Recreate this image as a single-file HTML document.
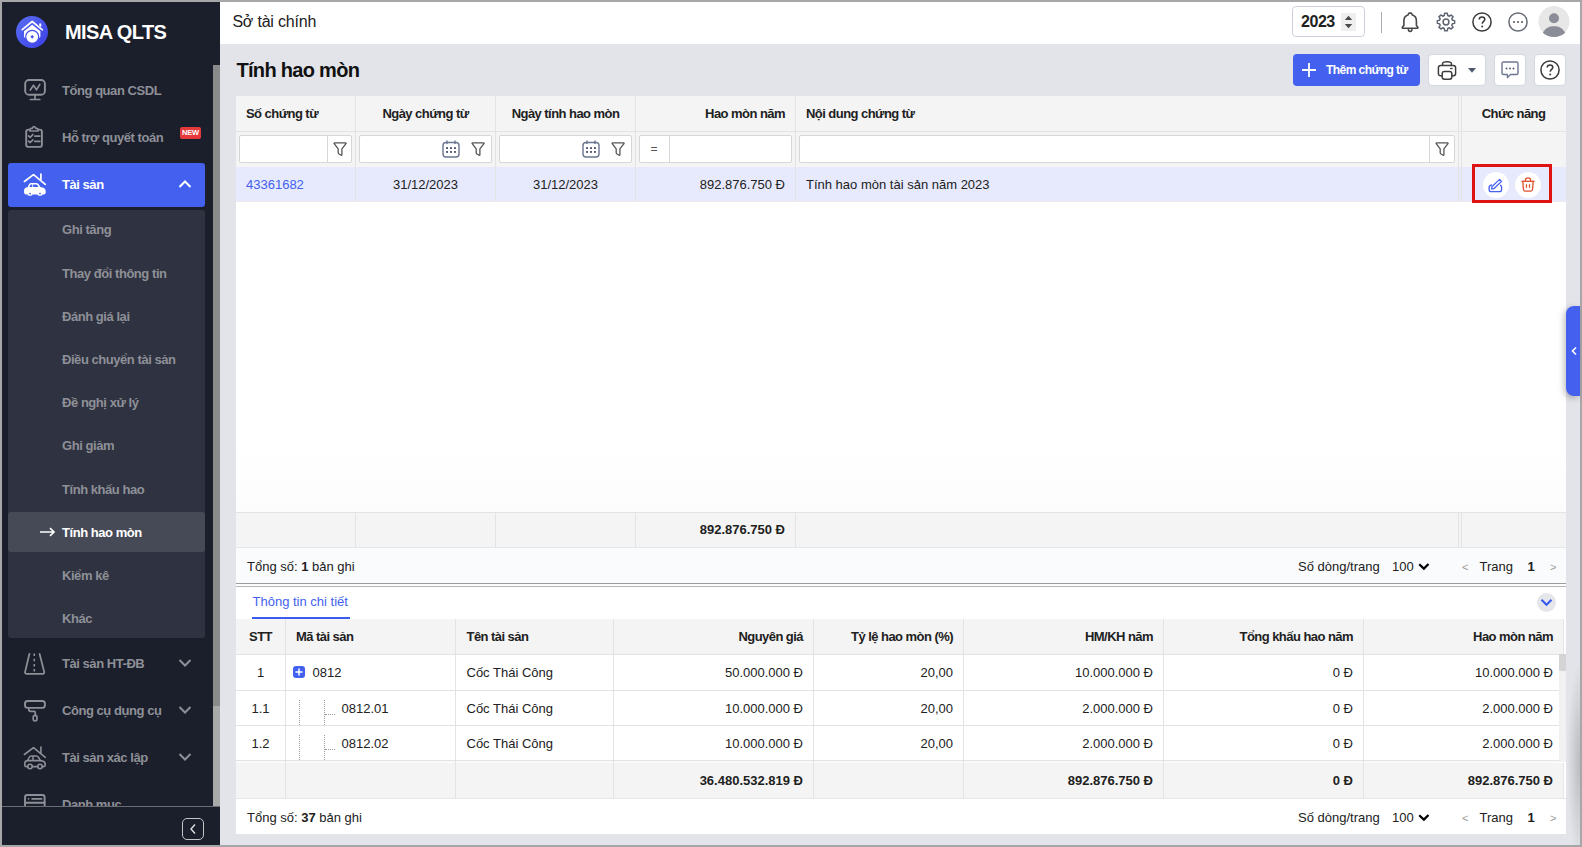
<!DOCTYPE html>
<html><head><meta charset="utf-8">
<style>
*{box-sizing:border-box;margin:0;padding:0}
html,body{width:1582px;height:847px;overflow:hidden}
body{background:#a7a7a9;font-family:"Liberation Sans",sans-serif;position:relative;color:#212121}
.a{position:absolute}
.t{position:absolute;line-height:1;white-space:nowrap}
.b{font-weight:bold}
.si{color:#8e9097;font-weight:bold;letter-spacing:-0.45px}
.th{font-weight:bold;letter-spacing:-0.55px;color:#212121}
svg{position:absolute;overflow:visible}
</style></head><body>

<div class="a" style="left:2px;top:2px;width:218px;height:843px;background:#1b1e2b"></div>
<svg style="left:16px;top:16px" width="32" height="32" viewBox="0 0 32 32">
<defs><linearGradient id="lg" x1="0" y1="0" x2="1" y2="1"><stop offset="0" stop-color="#5a70f2"/><stop offset="1" stop-color="#3b3ee6"/></linearGradient></defs>
<circle cx="16" cy="16" r="16" fill="url(#lg)"/>
<path d="M6.2 13.6 L16.2 5.5 L26.4 13.8" fill="none" stroke="#fff" stroke-width="1.7" stroke-linejoin="round" stroke-linecap="round"/>
<path d="M23.2 7.4 H25.2 V11.2 L23.2 9.6 Z" fill="#fff"/>
<path d="M8 15.3 L16.2 8.7 L24.4 15.3 V20.3 Q24.4 22 22.7 22 H9.7 Q8 22 8 20.3 Z" fill="#fff"/>
<circle cx="16.2" cy="20.8" r="7.1" fill="#4650ea"/>
<circle cx="16.2" cy="20.8" r="5.9" fill="#fff"/>
<rect x="14.9" y="19.5" width="2.6" height="2.6" fill="#4650ea" transform="rotate(45 16.2 20.8)"/>
</svg>
<div class="t b" style="left:65px;top:22.07px;font-size:20px;color:#fff;letter-spacing:-0.6px">MISA QLTS</div>
<div class="t si" style="left:62px;top:84.3px;font-size:13px;">Tổng quan CSDL</div>
<div class="t si" style="left:62px;top:130.5px;font-size:13px;">Hỗ trợ quyết toán</div>
<div class="a" style="left:180px;top:127px;width:21px;height:12px;background:#e5393b;border-radius:2px;color:#fff;font-size:7.5px;font-weight:bold;line-height:12px;text-align:center;letter-spacing:-0.2px">NEW</div>
<div class="a" style="left:8px;top:163px;width:197px;height:44px;background:#4361ee;border-radius:3px"></div>
<div class="t b" style="left:62px;top:177.8px;font-size:13px;color:#fff;letter-spacing:-0.45px">Tài sản</div>
<svg style="left:178px;top:179px" width="14" height="10" viewBox="0 0 14 10"><path d="M1.5 8 L7 2.5 L12.5 8" fill="none" stroke="#fff" stroke-width="2"/></svg>
<div class="a" style="left:8px;top:210px;width:197px;height:428px;background:#2f3241;border-radius:3px"></div>
<div class="a" style="left:8px;top:512px;width:197px;height:40px;background:#464a57;border-radius:3px"></div>
<div class="t si" style="left:62px;top:223.3px;font-size:13px;">Ghi tăng</div>
<div class="t si" style="left:62px;top:266.5px;font-size:13px;">Thay đổi thông tin</div>
<div class="t si" style="left:62px;top:309.7px;font-size:13px;">Đánh giá lại</div>
<div class="t si" style="left:62px;top:352.9px;font-size:13px;">Điều chuyển tài sản</div>
<div class="t si" style="left:62px;top:396.1px;font-size:13px;">Đề nghị xử lý</div>
<div class="t si" style="left:62px;top:439.3px;font-size:13px;">Ghi giảm</div>
<div class="t si" style="left:62px;top:482.5px;font-size:13px;">Tính khấu hao</div>
<div class="t si" style="left:62px;top:525.7px;font-size:13px;color:#fff">Tính hao mòn</div>
<svg style="left:39px;top:527px" width="17" height="10" viewBox="0 0 17 10"><path d="M1 5 H15 M11 1.2 L15 5 L11 8.8" fill="none" stroke="#fff" stroke-width="1.6"/></svg>
<div class="t si" style="left:62px;top:568.9px;font-size:13px;">Kiểm kê</div>
<div class="t si" style="left:62px;top:612.1px;font-size:13px;">Khác</div>
<div class="t si" style="left:62px;top:657.0px;font-size:13px;">Tài sản HT-ĐB</div>
<svg style="left:178px;top:658px" width="14" height="10" viewBox="0 0 14 10"><path d="M1.5 2 L7 7.5 L12.5 2" fill="none" stroke="#8e9097" stroke-width="2"/></svg>
<div class="t si" style="left:62px;top:703.8px;font-size:13px;">Công cụ dụng cụ</div>
<svg style="left:178px;top:704.8px" width="14" height="10" viewBox="0 0 14 10"><path d="M1.5 2 L7 7.5 L12.5 2" fill="none" stroke="#8e9097" stroke-width="2"/></svg>
<div class="t si" style="left:62px;top:751.0px;font-size:13px;">Tài sản xác lập</div>
<svg style="left:178px;top:752px" width="14" height="10" viewBox="0 0 14 10"><path d="M1.5 2 L7 7.5 L12.5 2" fill="none" stroke="#8e9097" stroke-width="2"/></svg>
<div class="t si" style="left:62px;top:797.5px;font-size:13px;">Danh mục</div>
<svg style="left:18px;top:72px" width="34" height="34" viewBox="0 0 34 34" fill="none" stroke="#8e9097" stroke-width="1.9" stroke-linecap="round" stroke-linejoin="round"><rect x="7.2" y="8" width="19.7" height="14.7" rx="3.8"/><path d="M17 22.7 V27.4 M12.4 27.5 H21.8" stroke-width="1.7"/><path d="M12.3 18 L15.5 13.3 L18.5 17.9 L21.8 12.4" stroke-width="1.7"/></svg>
<svg style="left:18px;top:120px" width="34" height="34" viewBox="0 0 34 34" fill="none" stroke="#8e9097" stroke-width="1.9" stroke-linecap="round" stroke-linejoin="round"><path d="M11.3 9.6 H10.4 C9 9.6 8.2 10.4 8.2 11.8 V24.7 C8.2 26.1 9 26.9 10.4 26.9 H21.7 C23.1 26.9 23.9 26.1 23.9 24.7 V11.8 C23.9 10.4 23.1 9.6 21.7 9.6 H20.8"/><path d="M12 11 V9.6 C12 8.9 12.5 8.4 13.2 8.4 H14.3 C14.5 7.2 15.1 6.6 16 6.6 C16.9 6.6 17.5 7.2 17.7 8.4 H18.8 C19.5 8.4 20 8.9 20 9.6 V11 Z" stroke-width="1.7"/><path d="M10.5 15.9 L12.2 17.3 L14.9 14.5 M10.5 21.1 L12.2 22.5 L14.9 19.9 M16.8 16.1 H21.8 M16.8 21.3 H21.8" stroke-width="1.7"/></svg>
<svg style="left:18px;top:168px" width="34" height="34" viewBox="0 0 34 34"><path d="M6.4 13.5 L15.5 6.6 L27.3 16.3 M22.9 6 V12" fill="none" stroke="#fff" stroke-width="1.7" stroke-linecap="round" stroke-linejoin="round"/><path d="M9.6 19.2 L11 16.3 C11.5 15.4 12.4 14.9 13.5 14.9 H18.2 C19.3 14.9 20.2 15.5 20.8 16.4 L22.4 19 C25.8 19.4 27.7 20.8 27.7 23.2 V24.5 C27.7 25.6 27 26.4 25.9 26.4 H24.5 C24.3 27.3 23.4 27.8 22 27.8 C20.6 27.8 19.7 27.3 19.5 26.4 H14.5 C14.3 27.3 13.4 27.8 12 27.8 C10.6 27.8 9.7 27.3 9.5 26.4 H8 C6.9 26.4 6.1 25.6 6.1 24.5 V22.5 C6.1 20.5 7.3 19.5 9.6 19.2 Z" fill="#fff"/><path d="M11.4 18.9 L12.3 17.1 C12.6 16.7 13 16.6 13.5 16.6 H14.3 V18.9 Z M15.1 16.6 H18 C18.7 16.6 19.2 16.9 19.6 17.4 L20.5 18.9 H15.1 Z" fill="#4361ee"/><circle cx="12" cy="25.6" r="0.9" fill="#4361ee"/><circle cx="22" cy="25.6" r="0.9" fill="#4361ee"/></svg>
<svg style="left:18px;top:647px" width="34" height="34" viewBox="0 0 34 34" fill="none" stroke="#8e9097" stroke-width="1.8" stroke-linecap="round" stroke-linejoin="round"><path d="M11.4 6.9 L7.1 24.9 C6.9 26 7.5 26.8 8.6 26.8 H24.7 C25.8 26.8 26.4 26 26.2 24.9 L21.6 6.9"/><path d="M16.3 6.5 V24.5" stroke-dasharray="2.5 2.7" stroke-linecap="butt" stroke-width="1.6"/></svg>
<svg style="left:18px;top:694px" width="34" height="34" viewBox="0 0 34 34" fill="none" stroke="#8e9097" stroke-width="1.9" stroke-linecap="round" stroke-linejoin="round"><rect x="7" y="7" width="19.9" height="6.9" rx="2.6"/><path d="M10.8 13.9 V15.6 C10.8 16.7 11.5 17.3 12.8 17.3 H16 C16.9 17.3 17.3 17.9 17.3 18.6 V21.3" stroke-width="1.7"/><rect x="15.2" y="21.4" width="3.8" height="5.6" rx="1.9" stroke-width="1.7"/></svg>
<svg style="left:18px;top:741px" width="34" height="34" viewBox="0 0 34 34" fill="none" stroke="#8e9097" stroke-width="1.6" stroke-linecap="round" stroke-linejoin="round"><path d="M6.4 13.5 L15.5 6.6 L27.3 16.3 M22.9 6 V12"/><path d="M9.8 19.2 L11.1 16.5 C11.6 15.5 12.4 15.1 13.5 15.1 H18.2 C19.2 15.1 20 15.6 20.6 16.5 L22.2 19.2 M15 15.3 V19" stroke-width="1.5"/><path d="M9.6 25.6 H8.3 C7.2 25.6 6.8 24.9 6.8 23.9 V22.6 C6.8 20.6 7.8 19.7 9.8 19.6 H22.3 C25.6 19.8 27.2 21.1 27.2 23.3 V24 C27.2 25 26.7 25.6 25.7 25.6 H24.4 M14.4 25.6 H19.6" stroke-width="1.6"/><circle cx="12" cy="25.5" r="2.2" stroke-width="1.6"/><circle cx="22" cy="25.5" r="2.2" stroke-width="1.6"/></svg>
<svg style="left:18px;top:785px" width="34" height="34" viewBox="0 0 34 34" fill="none" stroke="#8e9097" stroke-width="1.9" stroke-linecap="round"><path d="M7 24 V12.3 C7 10.8 7.9 10 9.3 10 H24.3 C25.7 10 26.6 10.8 26.6 12.3 V24"/><path d="M7 17.8 H26.6"/><path d="M10.5 13.9 H10.6 M14 13.9 H23.7" stroke-width="1.6"/></svg>
<div class="a" style="left:213px;top:65px;width:7px;height:641px;background:#8a8a8a"></div>
<div class="a" style="left:213px;top:706px;width:7px;height:100px;background:#aaa9aa"></div>
<div class="a" style="left:2px;top:806px;width:218px;height:39px;background:#1b1e2b;border-top:1px solid #6b6d75"></div>
<div class="a" style="left:182px;top:818px;width:22px;height:22px;border:1.5px solid #c4c5c9;border-radius:5px"></div>
<svg style="left:188px;top:823px" width="10" height="12" viewBox="0 0 10 12"><path d="M7 1.5 L3 6 L7 10.5" fill="none" stroke="#e0e0e0" stroke-width="1.4"/></svg>
<div class="a" style="left:220px;top:2px;width:1360px;height:843px;background:#e3e4e9"></div>
<div class="a" style="left:220px;top:2px;width:1360px;height:42px;background:#fff"></div>
<div class="t " style="left:232.4px;top:14.26px;font-size:16px;letter-spacing:-0.2px;color:#212121">Sở tài chính</div>
<div class="t b" style="left:236.5px;top:60.07px;font-size:20px;color:#111;letter-spacing:-0.7px">Tính hao mòn</div>
<div class="a" style="left:1292px;top:6px;width:73px;height:31px;background:#fff;border:1px solid #cdd0dc;border-radius:4px"></div>
<div class="t b" style="left:1301px;top:14.46px;font-size:16px;color:#212121;letter-spacing:-0.45px">2023</div>
<div class="a" style="left:1341px;top:13px;width:15px;height:18px;background:#efefef"></div>
<svg style="left:1341px;top:13px" width="15" height="18" viewBox="0 0 15 18"><path d="M3.8 7 L7.5 2.8 L11.2 7 Z M3.8 11 L7.5 15.2 L11.2 11 Z" fill="#4a4a4a"/></svg>
<div class="a" style="left:1381px;top:12px;width:1px;height:21px;background:#a9abb3"></div>
<svg style="left:1395px;top:6px" width="30" height="32" viewBox="0 0 30 32"><path d="M15.1 6.9 C13.9 6.9 13.2 7.8 12.9 9.1 C10.4 9.8 8.9 11.9 8.9 14.9 V19.4 L7.5 21 C7 21.6 7.3 22.3 8.1 22.3 H22.1 C22.9 22.3 23.2 21.6 22.7 21 L21.4 19.4 V14.9 C21.4 11.9 19.9 9.8 17.4 9.1 C17.1 7.8 16.4 6.9 15.1 6.9 Z" fill="none" stroke="#474747" stroke-width="1.6" stroke-linejoin="round"/><path d="M13.4 22.6 V23.5 C13.4 24.7 14.1 25.4 15.15 25.4 C16.2 25.4 16.9 24.7 16.9 23.5 V22.6" fill="none" stroke="#474747" stroke-width="1.5"/></svg>
<svg style="left:1436px;top:12px" width="20" height="20" viewBox="0 0 20 20"><path d="M8.27 3.53 L8.63 1.36 L11.37 1.36 L11.73 3.53 L13.35 4.20 L15.14 2.92 L17.08 4.86 L15.80 6.65 L16.47 8.27 L18.64 8.63 L18.64 11.37 L16.47 11.73 L15.80 13.35 L17.08 15.14 L15.14 17.08 L13.35 15.80 L11.73 16.47 L11.37 18.64 L8.63 18.64 L8.27 16.47 L6.65 15.80 L4.86 17.08 L2.92 15.14 L4.20 13.35 L3.53 11.73 L1.36 11.37 L1.36 8.63 L3.53 8.27 L4.20 6.65 L2.92 4.86 L4.86 2.92 L6.65 4.20 Z" fill="none" stroke="#5e6470" stroke-width="1.5" stroke-linejoin="round"/><circle cx="10" cy="10" r="2.9" fill="none" stroke="#5e6470" stroke-width="1.5"/></svg>
<svg style="left:1472px;top:12px" width="20" height="20" viewBox="0 0 20 20"><circle cx="10" cy="10" r="9.1" fill="none" stroke="#3a3a3a" stroke-width="1.5"/><path d="M7.2 7.6 C7.2 5.9 8.5 4.9 10 4.9 C11.6 4.9 12.8 5.9 12.8 7.4 C12.8 9.2 10.2 9.6 10.2 11.8" fill="none" stroke="#3a3a3a" stroke-width="1.5"/><circle cx="10.2" cy="14.6" r="1" fill="#3a3a3a"/></svg>
<svg style="left:1508px;top:12px" width="20" height="20" viewBox="0 0 20 20"><circle cx="10" cy="10" r="9.1" fill="none" stroke="#666b76" stroke-width="1.5"/><circle cx="6" cy="10" r="1" fill="#555"/><circle cx="10" cy="10" r="1" fill="#555"/><circle cx="14" cy="10" r="1" fill="#555"/></svg>
<svg style="left:1538px;top:6px" width="32" height="31" viewBox="0 0 32 31"><circle cx="16" cy="15.5" r="15.5" fill="#e7e7e8"/><circle cx="16" cy="12.3" r="5" fill="#8a8d97"/><path d="M4.8 26.8 C7.5 21.8 11 20.2 16 20.2 C21 20.2 24.5 21.8 27.2 26.8 C24.5 29.5 20.5 31 16 31 C11.5 31 7.5 29.5 4.8 26.8 Z" fill="#8a8d97"/></svg>
<div class="a" style="left:1293px;top:54px;width:127px;height:32px;background:#4361ee;border-radius:4px"></div>
<svg style="left:1302px;top:63px" width="14" height="14" viewBox="0 0 14 14"><path d="M7 0 V14 M0 7 H14" stroke="#fff" stroke-width="1.8"/></svg>
<div class="t b" style="left:1326px;top:63.84px;font-size:12px;color:#fff;letter-spacing:-0.55px">Thêm chứng từ</div>
<div class="a" style="left:1428px;top:54px;width:58px;height:32px;background:#fff;border:1px solid #d3d7df;border-radius:4px"></div>
<svg style="left:1437px;top:61px" width="20" height="20" viewBox="0 0 20 20"><path d="M5.6 4.3 V2.6 C5.6 1.4 6.5 0.8 10 0.8 C13.5 0.8 14.4 1.4 14.4 2.6 V4.3" fill="none" stroke="#3d3d3d" stroke-width="1.5"/><path d="M5 14.8 H3.6 C2.3 14.8 1.4 13.9 1.4 12.6 V6.7 C1.4 5.3 2.3 4.4 3.6 4.4 H16.4 C17.7 4.4 18.6 5.3 18.6 6.7 V12.6 C18.6 13.9 17.7 14.8 16.4 14.8 H15" fill="none" stroke="#3d3d3d" stroke-width="1.5"/><rect x="5.2" y="10.6" width="9.6" height="7.6" rx="2.2" fill="#fff" stroke="#3d3d3d" stroke-width="1.5"/><path d="M13.1 7.5 H15.6" stroke="#3d3d3d" stroke-width="1.3"/></svg>
<svg style="left:1468px;top:68px" width="8" height="5" viewBox="0 0 8 5"><path d="M0 0 H8 L4 4.8 Z" fill="#4f5670"/></svg>
<div class="a" style="left:1494px;top:54px;width:32px;height:32px;background:#fff;border:1px solid #d3d7df;border-radius:4px"></div>
<svg style="left:1501px;top:61px" width="18" height="18" viewBox="0 0 18 18"><path d="M2.5 1 H15.5 C16.4 1 17 1.6 17 2.5 V12 C17 12.9 16.4 13.5 15.5 13.5 H9.5 L6.5 16.5 L6.3 13.5 H2.5 C1.6 13.5 1 12.9 1 12 V2.5 C1 1.6 1.6 1 2.5 1 Z" fill="none" stroke="#6e7691" stroke-width="1.4" stroke-linejoin="round"/><circle cx="5.5" cy="7.5" r="0.9" fill="#4a5068"/><circle cx="9" cy="7.5" r="0.9" fill="#4a5068"/><circle cx="12.5" cy="7.5" r="0.9" fill="#4a5068"/></svg>
<div class="a" style="left:1534px;top:54px;width:32px;height:32px;background:#fff;border:1px solid #d3d7df;border-radius:4px"></div>
<svg style="left:1540px;top:60px" width="20" height="20" viewBox="0 0 20 20"><circle cx="10" cy="10" r="9.1" fill="none" stroke="#3a3a3a" stroke-width="1.5"/><path d="M7.2 7.6 C7.2 5.9 8.5 4.9 10 4.9 C11.6 4.9 12.8 5.9 12.8 7.4 C12.8 9.2 10.2 9.6 10.2 11.8" fill="none" stroke="#3a3a3a" stroke-width="1.5"/><circle cx="10.2" cy="14.6" r="1" fill="#3a3a3a"/></svg>
<div class="a" style="left:236px;top:96px;width:1330px;height:487px;background:#fff"></div>
<div class="a" style="left:236px;top:96px;width:1330px;height:71px;background:#f4f4f4"></div>
<div class="a" style="left:236px;top:131px;width:1330px;height:1px;background:#e3e3e3"></div>
<div class="a" style="left:236px;top:167px;width:1330px;height:34px;background:#e7eafc"></div>
<div class="a" style="left:236px;top:201px;width:1330px;height:1px;background:#ebebeb"></div>
<div class="a" style="left:355px;top:96px;width:1px;height:105px;background:#e3e3e3"></div>
<div class="a" style="left:495px;top:96px;width:1px;height:105px;background:#e3e3e3"></div>
<div class="a" style="left:635px;top:96px;width:1px;height:105px;background:#e3e3e3"></div>
<div class="a" style="left:795px;top:96px;width:1px;height:105px;background:#e3e3e3"></div>
<div class="a" style="left:1458px;top:96px;width:1px;height:105px;background:#e3e3e3"></div>
<div class="a" style="left:1461px;top:96px;width:1px;height:105px;background:#e3e3e3"></div>
<div class="t th" style="left:246px;top:107.0px;font-size:13px;">Số chứng từ</div>
<div class="t th" style="left:225.5px;width:400px;text-align:center;top:107.0px;font-size:13px;">Ngày chứng từ</div>
<div class="t th" style="left:365.5px;width:400px;text-align:center;top:107.0px;font-size:13px;">Ngày tính hao mòn</div>
<div class="t th" style="right:797px;top:107.0px;font-size:13px;">Hao mòn năm</div>
<div class="t th" style="left:806px;top:107.0px;font-size:13px;">Nội dung chứng từ</div>
<div class="t th" style="left:1313.5px;width:400px;text-align:center;top:107.0px;font-size:13px;">Chức năng</div>
<div class="a" style="left:239px;top:135px;width:113px;height:28px;background:#fff;border:1px solid #d6d6d6;border-radius:2px"></div>
<div class="a" style="left:327px;top:135px;width:1px;height:28px;background:#d6d6d6"></div>
<svg style="left:333.4px;top:142px" width="14" height="14" viewBox="0 0 14 14"><path d="M1.2 1.7 C0.9 1.2 1.1 0.8 1.7 0.8 H12.5 C13.1 0.8 13.3 1.2 13 1.7 L8.9 6.9 V12.7 C8.9 13.3 8.5 13.5 8.1 13.2 L5.7 11.7 C5.3 11.4 5.2 11.1 5.2 10.7 V6.9 Z" fill="none" stroke="#555" stroke-width="1.3" stroke-linejoin="round"/></svg>
<div class="a" style="left:359px;top:135px;width:133px;height:28px;background:#fff;border:1px solid #d6d6d6;border-radius:2px"></div>
<svg style="left:442px;top:140px" width="18" height="18" viewBox="0 0 18 18"><rect x="1" y="2.5" width="16" height="14.5" rx="3" fill="none" stroke="#6b7590" stroke-width="1.4"/><path d="M5 0.5 V4 M13 0.5 V4" stroke="#6b7590" stroke-width="1.4"/><g fill="#4f5872"><rect x="4.1" y="7.1" width="1.9" height="1.9"/><rect x="8.05" y="7.1" width="1.9" height="1.9"/><rect x="12" y="7.1" width="1.9" height="1.9"/><rect x="4.1" y="11" width="1.9" height="1.9"/><rect x="8.05" y="11" width="1.9" height="1.9"/><rect x="12" y="11" width="1.9" height="1.9"/></g></svg>
<svg style="left:471.4px;top:142px" width="14" height="14" viewBox="0 0 14 14"><path d="M1.2 1.7 C0.9 1.2 1.1 0.8 1.7 0.8 H12.5 C13.1 0.8 13.3 1.2 13 1.7 L8.9 6.9 V12.7 C8.9 13.3 8.5 13.5 8.1 13.2 L5.7 11.7 C5.3 11.4 5.2 11.1 5.2 10.7 V6.9 Z" fill="none" stroke="#555" stroke-width="1.3" stroke-linejoin="round"/></svg>
<div class="a" style="left:499px;top:135px;width:133px;height:28px;background:#fff;border:1px solid #d6d6d6;border-radius:2px"></div>
<svg style="left:582px;top:140px" width="18" height="18" viewBox="0 0 18 18"><rect x="1" y="2.5" width="16" height="14.5" rx="3" fill="none" stroke="#6b7590" stroke-width="1.4"/><path d="M5 0.5 V4 M13 0.5 V4" stroke="#6b7590" stroke-width="1.4"/><g fill="#4f5872"><rect x="4.1" y="7.1" width="1.9" height="1.9"/><rect x="8.05" y="7.1" width="1.9" height="1.9"/><rect x="12" y="7.1" width="1.9" height="1.9"/><rect x="4.1" y="11" width="1.9" height="1.9"/><rect x="8.05" y="11" width="1.9" height="1.9"/><rect x="12" y="11" width="1.9" height="1.9"/></g></svg>
<svg style="left:611.4px;top:142px" width="14" height="14" viewBox="0 0 14 14"><path d="M1.2 1.7 C0.9 1.2 1.1 0.8 1.7 0.8 H12.5 C13.1 0.8 13.3 1.2 13 1.7 L8.9 6.9 V12.7 C8.9 13.3 8.5 13.5 8.1 13.2 L5.7 11.7 C5.3 11.4 5.2 11.1 5.2 10.7 V6.9 Z" fill="none" stroke="#555" stroke-width="1.3" stroke-linejoin="round"/></svg>
<div class="a" style="left:639px;top:135px;width:153px;height:28px;background:#fff;border:1px solid #d6d6d6;border-radius:2px"></div>
<div class="a" style="left:669px;top:135px;width:1px;height:28px;background:#d6d6d6"></div>
<div class="t " style="left:454px;width:400px;text-align:center;top:142.84px;font-size:12px;color:#555">=</div>
<div class="a" style="left:799px;top:135px;width:656px;height:28px;background:#fff;border:1px solid #d6d6d6;border-radius:2px"></div>
<div class="a" style="left:1429px;top:135px;width:1px;height:28px;background:#d6d6d6"></div>
<svg style="left:1435.4px;top:142px" width="14" height="14" viewBox="0 0 14 14"><path d="M1.2 1.7 C0.9 1.2 1.1 0.8 1.7 0.8 H12.5 C13.1 0.8 13.3 1.2 13 1.7 L8.9 6.9 V12.7 C8.9 13.3 8.5 13.5 8.1 13.2 L5.7 11.7 C5.3 11.4 5.2 11.1 5.2 10.7 V6.9 Z" fill="none" stroke="#555" stroke-width="1.3" stroke-linejoin="round"/></svg>
<div class="t " style="left:246px;top:178.0px;font-size:13px;color:#4361ee">43361682</div>
<div class="t " style="left:225.5px;width:400px;text-align:center;top:178.0px;font-size:13px;">31/12/2023</div>
<div class="t " style="left:365.5px;width:400px;text-align:center;top:178.0px;font-size:13px;">31/12/2023</div>
<div class="t " style="right:797px;top:178.0px;font-size:13px;">892.876.750 Đ</div>
<div class="t " style="left:806px;top:178.0px;font-size:13px;">Tính hao mòn tài sản năm 2023</div>
<div class="a" style="left:1472px;top:164px;width:80px;height:39px;border:3px solid #e01313"></div>
<div class="a" style="left:1483px;top:172px;width:26px;height:26px;border-radius:50%;background:#fff"></div>
<div class="a" style="left:1515px;top:172px;width:26px;height:26px;border-radius:50%;background:#fff"></div>
<svg style="left:1488px;top:178px" width="15" height="15" viewBox="0 0 15 15"><path d="M3.6 10.9 L3.85 8.8 L11.6 1.4 L13.55 3.4 L5.8 10.8 Z" fill="none" stroke="#4361ee" stroke-width="1.25" stroke-linejoin="round"/><path d="M3.5 6.9 C2.2 7.2 1.1 8 1.1 9.5 V11.5 C1.1 12.9 2 13.7 3.4 13.7 H11.3 C12.7 13.7 13.6 12.9 13.6 11.5 V9.6 C13.6 8.7 13.3 8 12.6 7.2" fill="none" stroke="#4361ee" stroke-width="1.3" stroke-linecap="round"/></svg>
<svg style="left:1521px;top:177px" width="14" height="15" viewBox="0 0 14 15"><path d="M0.4 4.3 H13.6" stroke="#e0502a" stroke-width="1.3"/><path d="M4.4 4.2 V3 C4.4 1.7 5.4 0.8 7 0.8 C8.6 0.8 9.6 1.7 9.6 3 V4.2" fill="none" stroke="#e0502a" stroke-width="1.3"/><path d="M1.8 4.4 L2.4 12.3 C2.5 13.5 3.2 14.2 4.4 14.2 H9.6 C10.8 14.2 11.5 13.5 11.6 12.3 L12.2 4.4" fill="none" stroke="#e0502a" stroke-width="1.3"/><path d="M5.5 7.2 V10.8 M8.5 7.2 V10.8" stroke="#e0502a" stroke-width="1.3"/></svg>
<div class="a" style="left:236px;top:440px;width:1330px;height:72px;background:linear-gradient(180deg,rgba(0,0,0,0),rgba(0,20,40,0.012))"></div>
<div class="a" style="left:236px;top:512px;width:1330px;height:35px;background:#f4f4f5"></div>
<div class="a" style="left:236px;top:512px;width:1330px;height:1px;background:#e3e3e3"></div>
<div class="a" style="left:355px;top:512px;width:1px;height:35px;background:#e3e3e3"></div>
<div class="a" style="left:495px;top:512px;width:1px;height:35px;background:#e3e3e3"></div>
<div class="a" style="left:635px;top:512px;width:1px;height:35px;background:#e3e3e3"></div>
<div class="a" style="left:795px;top:512px;width:1px;height:35px;background:#e3e3e3"></div>
<div class="a" style="left:1458px;top:512px;width:1px;height:35px;background:#e3e3e3"></div>
<div class="a" style="left:1461px;top:512px;width:1px;height:35px;background:#e3e3e3"></div>
<div class="t b" style="right:797px;top:523.0px;font-size:13px;">892.876.750 Đ</div>
<div class="a" style="left:236px;top:547px;width:1330px;height:36px;background:#fafbfc"></div>
<div class="a" style="left:236px;top:547px;width:1330px;height:1px;background:#e6e6e6"></div>
<div class="t " style="left:247px;top:560.0px;font-size:13px;">Tổng số: <b>1</b> bản ghi</div>
<div class="t " style="left:1298px;top:560.0px;font-size:13px;">Số dòng/trang</div>
<div class="t " style="left:1392px;top:560.0px;font-size:13px;">100</div>
<svg style="left:1417px;top:561px" width="14" height="10" viewBox="0 0 14 10"><path d="M2.2 3.2 L6.9 7.6 L11.5 2.9" fill="none" stroke="#000" stroke-width="2.2"/></svg>
<div class="t " style="left:1462px;top:561.69px;font-size:11px;color:#9a9a9a">&lt;</div>
<div class="t " style="left:1479.5px;top:560.0px;font-size:13px;">Trang</div>
<div class="t b" style="left:1527.5px;top:560.0px;font-size:13px;">1</div>
<div class="t " style="left:1550px;top:561.69px;font-size:11px;color:#9a9a9a">&gt;</div>
<div class="a" style="left:236px;top:583px;width:1330px;height:1px;background:#9c9c9c"></div>
<div class="a" style="left:236px;top:584px;width:1330px;height:2px;background:#fdfdfd"></div>
<div class="a" style="left:236px;top:586px;width:1330px;height:1px;background:#b5b5b5"></div>
<div class="a" style="left:1566px;top:306px;width:14px;height:90px;background:#4361ee;border-radius:8px 0 0 8px;box-shadow:-2px 2px 6px rgba(0,0,0,0.25)"></div>
<svg style="left:1570px;top:346px" width="8" height="10" viewBox="0 0 8 10"><path d="M6 1.5 L2.5 5 L6 8.5" fill="none" stroke="#fff" stroke-width="1.6"/></svg>
<div class="a" style="left:1566px;top:660px;width:14px;height:185px;background:radial-gradient(ellipse 13px 100px at 100% 55%,rgba(0,0,0,0.18),rgba(0,0,0,0))"></div>
<div class="a" style="left:236px;top:587px;width:1330px;height:247px;background:#fff"></div>
<div class="t " style="left:252.5px;top:595.0px;font-size:13px;color:#4361ee">Thông tin chi tiết</div>
<div class="a" style="left:252px;top:617px;width:98px;height:2px;background:#3a5af0"></div>
<div class="a" style="left:1537px;top:593px;width:19px;height:19px;border-radius:50%;background:#e5e6ea"></div>
<svg style="left:1540px;top:598px" width="13" height="9" viewBox="0 0 13 9"><path d="M1.5 1.8 L6.5 6.8 L11.5 1.8" fill="none" stroke="#3a5af0" stroke-width="2.1"/></svg>
<div class="a" style="left:236px;top:619px;width:1328px;height:35px;background:#f4f4f4"></div>
<div class="a" style="left:236px;top:654px;width:1323px;height:1px;background:#e3e3e3"></div>
<div class="a" style="left:285px;top:619px;width:1px;height:35px;background:#e3e3e3"></div>
<div class="a" style="left:455px;top:619px;width:1px;height:35px;background:#e3e3e3"></div>
<div class="a" style="left:613px;top:619px;width:1px;height:35px;background:#e3e3e3"></div>
<div class="a" style="left:813px;top:619px;width:1px;height:35px;background:#e3e3e3"></div>
<div class="a" style="left:963px;top:619px;width:1px;height:35px;background:#e3e3e3"></div>
<div class="a" style="left:1163px;top:619px;width:1px;height:35px;background:#e3e3e3"></div>
<div class="a" style="left:1363px;top:619px;width:1px;height:35px;background:#e3e3e3"></div>
<div class="a" style="left:1563px;top:619px;width:1px;height:35px;background:#e3e3e3"></div>
<div class="a" style="left:285px;top:654px;width:1px;height:144px;background:#e3e3e3"></div>
<div class="a" style="left:455px;top:654px;width:1px;height:144px;background:#e3e3e3"></div>
<div class="a" style="left:613px;top:654px;width:1px;height:144px;background:#e3e3e3"></div>
<div class="a" style="left:813px;top:654px;width:1px;height:144px;background:#e3e3e3"></div>
<div class="a" style="left:963px;top:654px;width:1px;height:144px;background:#e3e3e3"></div>
<div class="a" style="left:1163px;top:654px;width:1px;height:144px;background:#e3e3e3"></div>
<div class="a" style="left:1363px;top:654px;width:1px;height:144px;background:#e3e3e3"></div>
<div class="a" style="left:236px;top:690px;width:1323px;height:1px;background:#e3e3e3"></div>
<div class="a" style="left:236px;top:725px;width:1323px;height:1px;background:#e3e3e3"></div>
<div class="a" style="left:236px;top:760px;width:1323px;height:1px;background:#e3e3e3"></div>
<div class="a" style="left:236px;top:761px;width:1323px;height:2px;background:#fafafa"></div>
<div class="a" style="left:285px;top:761px;width:1px;height:2px;background:#e3e3e3"></div>
<div class="a" style="left:455px;top:761px;width:1px;height:2px;background:#e3e3e3"></div>
<div class="a" style="left:613px;top:761px;width:1px;height:2px;background:#e3e3e3"></div>
<div class="a" style="left:813px;top:761px;width:1px;height:2px;background:#e3e3e3"></div>
<div class="a" style="left:963px;top:761px;width:1px;height:2px;background:#e3e3e3"></div>
<div class="a" style="left:1163px;top:761px;width:1px;height:2px;background:#e3e3e3"></div>
<div class="a" style="left:1363px;top:761px;width:1px;height:2px;background:#e3e3e3"></div>
<div class="a" style="left:1559px;top:654px;width:7px;height:108px;background:#f1f1f1"></div>
<div class="a" style="left:1559px;top:654px;width:7px;height:17px;background:#d4d4d4"></div>
<div class="t th" style="left:60.5px;width:400px;text-align:center;top:630.0px;font-size:13px;">STT</div>
<div class="t th" style="left:296px;top:630.0px;font-size:13px;">Mã tài sản</div>
<div class="t th" style="left:466.5px;top:630.0px;font-size:13px;">Tên tài sản</div>
<div class="t th" style="right:779px;top:630.0px;font-size:13px;">Nguyên giá</div>
<div class="t th" style="right:629px;top:630.0px;font-size:13px;">Tỷ lệ hao mòn (%)</div>
<div class="t th" style="right:429px;top:630.0px;font-size:13px;">HM/KH năm</div>
<div class="t th" style="right:229px;top:630.0px;font-size:13px;">Tổng khấu hao năm</div>
<div class="t th" style="right:29px;top:630.0px;font-size:13px;">Hao mòn năm</div>
<div class="t " style="left:60.5px;width:400px;text-align:center;top:666.0px;font-size:13px;">1</div>
<div class="a" style="left:293px;top:666px;width:12px;height:12px;background:#4361ee;border-radius:3px"></div>
<svg style="left:293px;top:666px" width="12" height="12" viewBox="0 0 12 12"><path d="M6 2.5 V9.5 M2.5 6 H9.5" stroke="#fff" stroke-width="1.5"/></svg>
<div class="t " style="left:312.5px;top:666.0px;font-size:13px;">0812</div>
<div class="t " style="left:466.5px;top:666.0px;font-size:13px;">Cốc Thái Công</div>
<div class="t " style="right:779px;top:666.0px;font-size:13px;">50.000.000 Đ</div>
<div class="t " style="right:629px;top:666.0px;font-size:13px;">20,00</div>
<div class="t " style="right:429px;top:666.0px;font-size:13px;">10.000.000 Đ</div>
<div class="t " style="right:229px;top:666.0px;font-size:13px;">0 Đ</div>
<div class="t " style="right:29px;top:666.0px;font-size:13px;">10.000.000 Đ</div>
<div class="t " style="left:60.5px;width:400px;text-align:center;top:702.0px;font-size:13px;">1.1</div>
<div class="t " style="left:341.5px;top:702.0px;font-size:13px;">0812.01</div>
<div class="a" style="left:299px;top:700px;width:0;height:25px;border-left:1px dotted #9a9a9a"></div>
<div class="a" style="left:324px;top:700px;width:0;height:25px;border-left:1px dotted #9a9a9a"></div>
<div class="a" style="left:325px;top:714px;width:10px;height:0;border-top:1px dotted #9a9a9a"></div>
<div class="t " style="left:466.5px;top:702.0px;font-size:13px;">Cốc Thái Công</div>
<div class="t " style="right:779px;top:702.0px;font-size:13px;">10.000.000 Đ</div>
<div class="t " style="right:629px;top:702.0px;font-size:13px;">20,00</div>
<div class="t " style="right:429px;top:702.0px;font-size:13px;">2.000.000 Đ</div>
<div class="t " style="right:229px;top:702.0px;font-size:13px;">0 Đ</div>
<div class="t " style="right:29px;top:702.0px;font-size:13px;">2.000.000 Đ</div>
<div class="t " style="left:60.5px;width:400px;text-align:center;top:737.0px;font-size:13px;">1.2</div>
<div class="t " style="left:341.5px;top:737.0px;font-size:13px;">0812.02</div>
<div class="a" style="left:299px;top:735px;width:0;height:25px;border-left:1px dotted #9a9a9a"></div>
<div class="a" style="left:324px;top:735px;width:0;height:25px;border-left:1px dotted #9a9a9a"></div>
<div class="a" style="left:325px;top:749px;width:10px;height:0;border-top:1px dotted #9a9a9a"></div>
<div class="t " style="left:466.5px;top:737.0px;font-size:13px;">Cốc Thái Công</div>
<div class="t " style="right:779px;top:737.0px;font-size:13px;">10.000.000 Đ</div>
<div class="t " style="right:629px;top:737.0px;font-size:13px;">20,00</div>
<div class="t " style="right:429px;top:737.0px;font-size:13px;">2.000.000 Đ</div>
<div class="t " style="right:229px;top:737.0px;font-size:13px;">0 Đ</div>
<div class="t " style="right:29px;top:737.0px;font-size:13px;">2.000.000 Đ</div>
<div class="a" style="left:236px;top:763px;width:1328px;height:35px;background:#f4f4f4"></div>
<div class="a" style="left:1563px;top:763px;width:1px;height:35px;background:#e6e6e6"></div>
<div class="a" style="left:285px;top:763px;width:1px;height:35px;background:#e3e3e3"></div>
<div class="a" style="left:455px;top:763px;width:1px;height:35px;background:#e3e3e3"></div>
<div class="a" style="left:613px;top:763px;width:1px;height:35px;background:#e3e3e3"></div>
<div class="a" style="left:813px;top:763px;width:1px;height:35px;background:#e3e3e3"></div>
<div class="a" style="left:963px;top:763px;width:1px;height:35px;background:#e3e3e3"></div>
<div class="a" style="left:1163px;top:763px;width:1px;height:35px;background:#e3e3e3"></div>
<div class="a" style="left:1363px;top:763px;width:1px;height:35px;background:#e3e3e3"></div>
<div class="a" style="left:236px;top:798px;width:1330px;height:1px;background:#e6e6e6"></div>
<div class="t b" style="right:779px;top:774.0px;font-size:13px;">36.480.532.819 Đ</div>
<div class="t b" style="right:429px;top:774.0px;font-size:13px;">892.876.750 Đ</div>
<div class="t b" style="right:229px;top:774.0px;font-size:13px;">0 Đ</div>
<div class="t b" style="right:29px;top:774.0px;font-size:13px;">892.876.750 Đ</div>
<div class="t " style="left:247px;top:811.0px;font-size:13px;">Tổng số: <b>37</b> bản ghi</div>
<div class="t " style="left:1298px;top:811.0px;font-size:13px;">Số dòng/trang</div>
<div class="t " style="left:1392px;top:811.0px;font-size:13px;">100</div>
<svg style="left:1417px;top:812px" width="14" height="10" viewBox="0 0 14 10"><path d="M2.2 3.2 L6.9 7.6 L11.5 2.9" fill="none" stroke="#000" stroke-width="2.2"/></svg>
<div class="t " style="left:1462px;top:812.69px;font-size:11px;color:#9a9a9a">&lt;</div>
<div class="t " style="left:1479.5px;top:811.0px;font-size:13px;">Trang</div>
<div class="t b" style="left:1527.5px;top:811.0px;font-size:13px;">1</div>
<div class="t " style="left:1550px;top:812.69px;font-size:11px;color:#9a9a9a">&gt;</div>
</body></html>
